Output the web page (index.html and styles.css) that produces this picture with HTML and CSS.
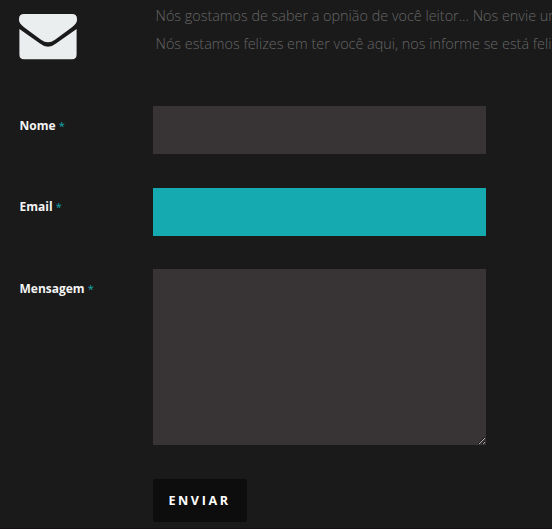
FILE: index.html
```html
<!DOCTYPE html>
<html lang="pt-BR">
<head>
<meta charset="utf-8">
<title>Contato</title>
<link rel="stylesheet" href="styles.css">
</head>
<body>
<main class="contact">
  <header class="intro">
    <svg class="mail" viewBox="0 0 58 46" aria-hidden="true">
      <path d="M5 0H53Q58 0 58 5V6Q58 9.5 53 13.2L36 25.8Q29 30.8 22 25.8L5 13.2Q0 9.5 0 6V5Q0 0 5 0Z"/>
      <path d="M0.4 15L21 29.5Q29 36 37 29.5L57.6 15V40.5Q57.6 45.3 53 45.3H5Q0.4 45.3 0.4 40.5Z"/>
    </svg>
    <div class="intro-text">
      <p>Nós gostamos de saber a opnião de você leitor... Nos envie um</p>
      <p>Nós estamos felizes em ter você aqui, nos informe se está feliz</p>
    </div>
  </header>
  <form class="form">
    <label class="label" for="nome">Nome <span class="required">*</span></label>
    <input class="field" id="nome" type="text">
    <label class="label label-raised" for="email">Email <span class="required">*</span></label>
    <input class="field field-active" id="email" type="text">
    <label class="label label-raised" for="mensagem">Mensagem <span class="required">*</span></label>
    <textarea class="field field-message" id="mensagem"></textarea>
    <button class="submit" type="button">ENVIAR</button>
  </form>
</main>
</body>
</html>
```
FILE: styles.css
```css
* { box-sizing: border-box; }
body {
  margin: 0;
  height: 529px;
  overflow: hidden;
  background: #1a1a1a;
  border-bottom: 1px solid #141013;
  font-family: "Open Sans", sans-serif;
}
.contact { padding-left: 19px; }
.intro { display: flex; height: 106px; }
.mail {
  flex: none;
  width: 58px;
  height: 46px;
  margin: 14px 78.5px 0 0;
  fill: #ebeeef;
}
.intro-text { padding-top: 2px; white-space: nowrap; }
.intro-text p {
  margin: 0;
  font-size: 14.4px;
  font-weight: 300;
  line-height: 28px;
  color: #666;
}
.form {
  display: grid;
  grid-template-columns: 134px 333px;
  grid-template-rows: 48px 48px 176px 43px;
  row-gap: 34px;
}
.label {
  padding: 10px 0 0 0.5px;
  font-size: 12px;
  font-weight: 700;
  line-height: 20px;
  color: #f4f4f4;
}
.label-raised { padding-top: 9px; }
.required { font-size: 11px; font-weight: 400; color: #14aab0; }
.field {
  width: 333px;
  height: 48px;
  margin: 0;
  padding: 12px;
  border: 0;
  border-radius: 0;
  outline: 0;
  background: #383334;
  color: #fff;
  font: 13px "Open Sans", sans-serif;
}
.field-active { background: #14aab0; }
.field-message { height: 176px; margin-top: -1px; resize: both; }
.submit {
  grid-column: 2;
  justify-self: start;
  width: 94px;
  height: 43px;
  margin-top: -1px;
  padding: 0 1px 0 0;
  border: 0;
  border-radius: 2px;
  background: #0d0d0d;
  color: #fff;
  font: 700 12.6px "Open Sans", sans-serif;
  letter-spacing: 2.6px;
}
```
